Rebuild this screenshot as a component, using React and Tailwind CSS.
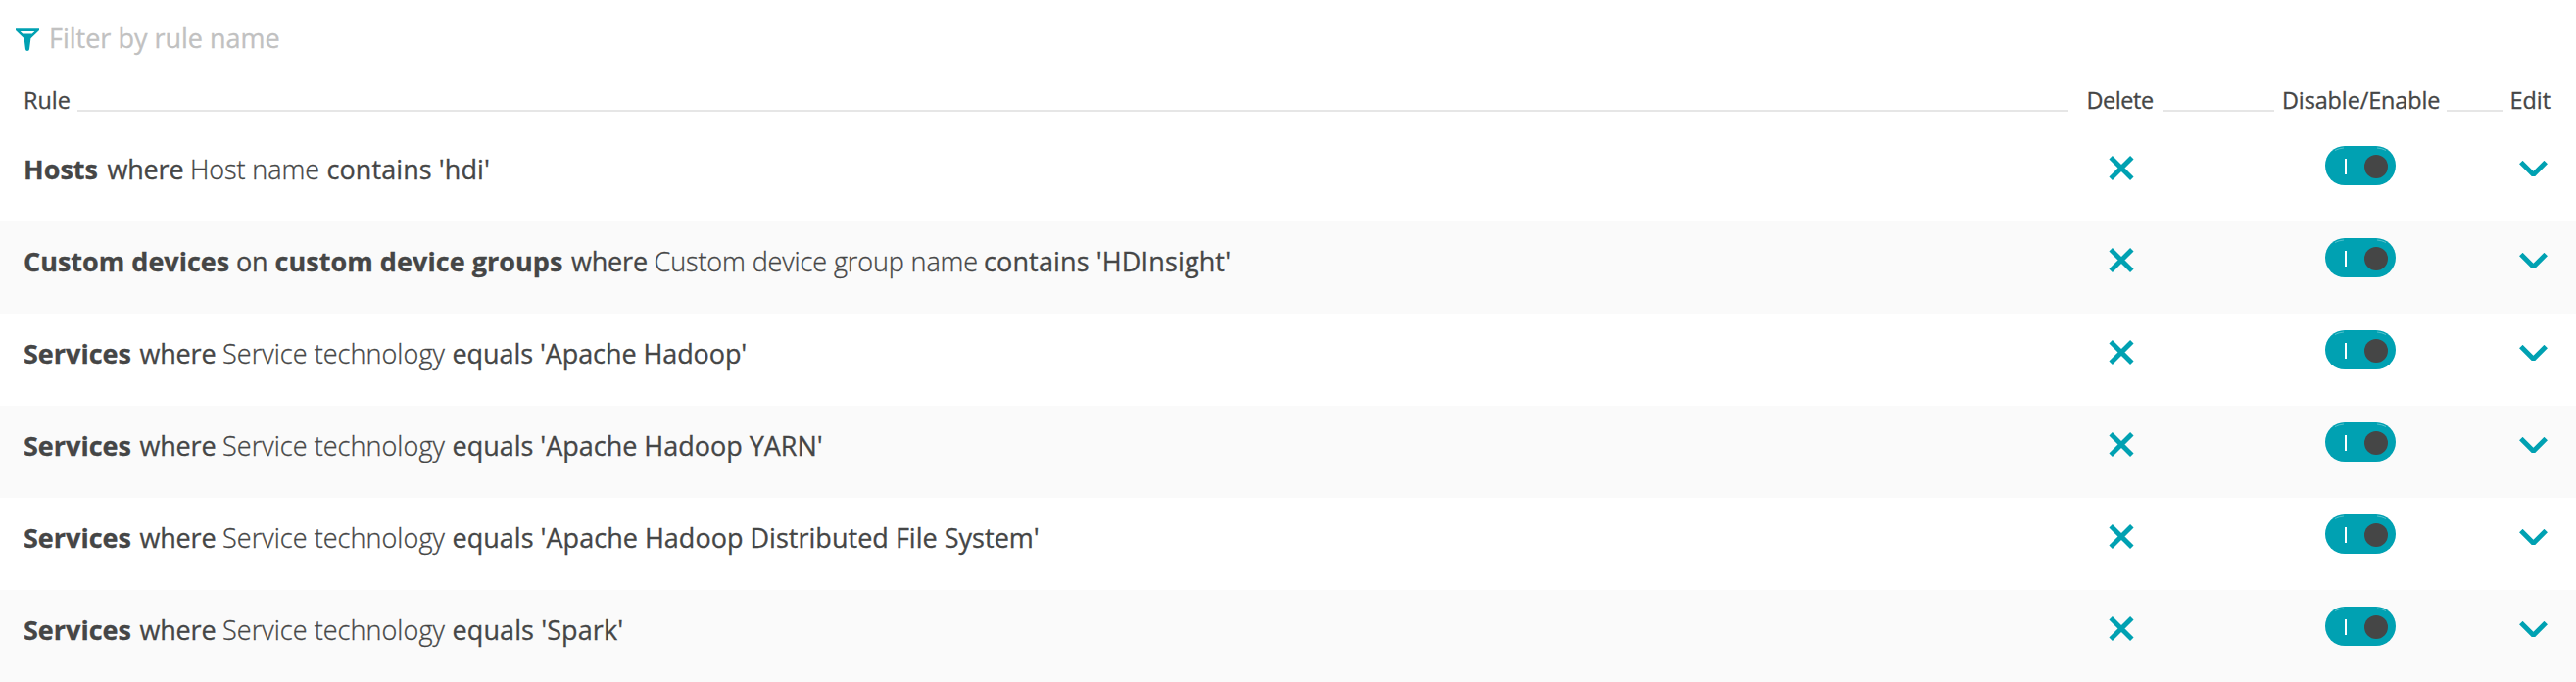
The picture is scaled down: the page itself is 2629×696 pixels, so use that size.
const where84 = ["where", "w-[84.5px] tracking-[-0.2px]"];
const where83 = ["where", "w-[84.5px] tracking-[-0.2px]"];
const services = ["Services", "w-[118.5px] font-bold"];
const technology = ["Service technology", "w-[234.5px] font-light tracking-[0.05px]"];

const rules = [
  [
    ["Hosts", "w-[85.5px] font-bold"],
    where83,
    ["Host name", "w-[139.5px] font-light tracking-[-0.1px]"],
    ["contains 'hdi'", "tracking-[0.08px]"],
  ],
  [
    ["Custom devices", "w-[217px] font-bold"],
    ["on", "w-[39.5px] tracking-[-0.3px]"],
    ["custom device groups", "w-[302.5px] font-bold tracking-[0.05px]"],
    where84,
    ["Custom device group name", "w-[336.5px] font-light tracking-[-0.12px]"],
    ["contains 'HDInsight'", "tracking-[0.13px]"],
  ],
  [services, where83, technology, ["equals 'Apache Hadoop'", "tracking-[-0.08px]"]],
  [services, where83, technology, ["equals 'Apache Hadoop YARN'", "tracking-[-0.02px]"]],
  [services, where83, technology, ["equals 'Apache Hadoop Distributed File System'", "tracking-[0.02px]"]],
  [services, where83, technology, ["equals 'Spark'", "tracking-[0.1px]"]],
];

function FilterIcon() {
  return (
    <svg className="mt-[29px] h-6 w-6 shrink-0" viewBox="0 0 24 24" fill="#00a1b2">
      <path
        fillRule="evenodd"
        d="M0 0.2H24V2L15.4 10.2L14 21.2Q13.8 23 12 23Q10.2 23 10 21.2L8.6 10.2L0 2ZM4.6 3L7.2 5.6H16.8L19.4 3Z"
      />
    </svg>
  );
}

function DeleteIcon() {
  return (
    <svg className="mt-[27px] h-[26px] w-[26px]" viewBox="0 0 26 26" fill="none" stroke="#00a1b2" strokeWidth="5">
      <path d="M2.2 1.8L23.8 23.2M23.8 1.8L2.2 23.2" />
    </svg>
  );
}

function Toggle() {
  return (
    <svg className="mt-[17px] h-10 w-[72px]" viewBox="0 0 72 40">
      <rect width="72" height="40" rx="20" fill="#00a1b2" />
      <path d="M10 4.5Q14 2.4 19 2M53 2Q58 2.4 62 4.5" fill="none" stroke="#fff" strokeOpacity="0.4" strokeWidth="0.8" />
      <rect x="20" y="13" width="2" height="16" fill="#fff" />
      <circle cx="52" cy="21" r="12" fill="#454646" />
    </svg>
  );
}

function ChevronIcon() {
  return (
    <svg className="mt-8 h-[18px] w-[30px]" viewBox="0 0 30 18" fill="none" stroke="#00a1b2" strokeWidth="5">
      <path d="M1.8 1.6L14.5 14.2L27.2 1.6" strokeLinejoin="bevel" />
    </svg>
  );
}

function Line({ className }) {
  return <div className={`mt-[33px] h-0.5 bg-[#e6e6e6] ${className}`} />;
}

export default function App() {
  return (
    <div className="h-[696px] w-full overflow-hidden bg-white font-['Open_Sans',sans-serif] text-[27px] text-[#454646] [-webkit-text-stroke:0.3px]">
      <div className="flex h-[79px] pl-4">
        <FilterIcon />
        <div className="ml-[10px] mt-[20px] leading-[38px] whitespace-nowrap text-[#c1c1c1]">Filter by rule name</div>
      </div>
      <div className="flex h-[53px] pl-6 text-[23.4px] leading-[46px] whitespace-nowrap">
        <div className="w-[55px]">Rule</div>
        <Line className="w-[2032px]" />
        <div className="ml-[18.5px] w-[77.5px] tracking-[-0.4px]">Delete</div>
        <Line className="w-[114px]" />
        <div className="ml-[8px] w-[168px] tracking-[-0.1px]">Disable/Enable</div>
        <Line className="w-[57px]" />
        <div className="ml-[7.5px]">Edit</div>
      </div>
      <div>
        {rules.map((parts, i) => (
          <div
            key={i}
            className="grid h-[94px] grid-cols-[1fr_72px_172px_72px_126px_58px] pl-6 odd:bg-white even:bg-[#fafafa]"
          >
            <div className="flex pt-[21px] leading-10 whitespace-nowrap">
              {parts.map(([text, style], j) => (
                <span key={j} className={`shrink-0 ${style}`}>{text}</span>
              ))}
            </div>
            <div className="flex items-start justify-center"><DeleteIcon /></div>
            <div />
            <div className="flex items-start"><Toggle /></div>
            <div />
            <div className="flex items-start"><ChevronIcon /></div>
          </div>
        ))}
      </div>
    </div>
  );
}
